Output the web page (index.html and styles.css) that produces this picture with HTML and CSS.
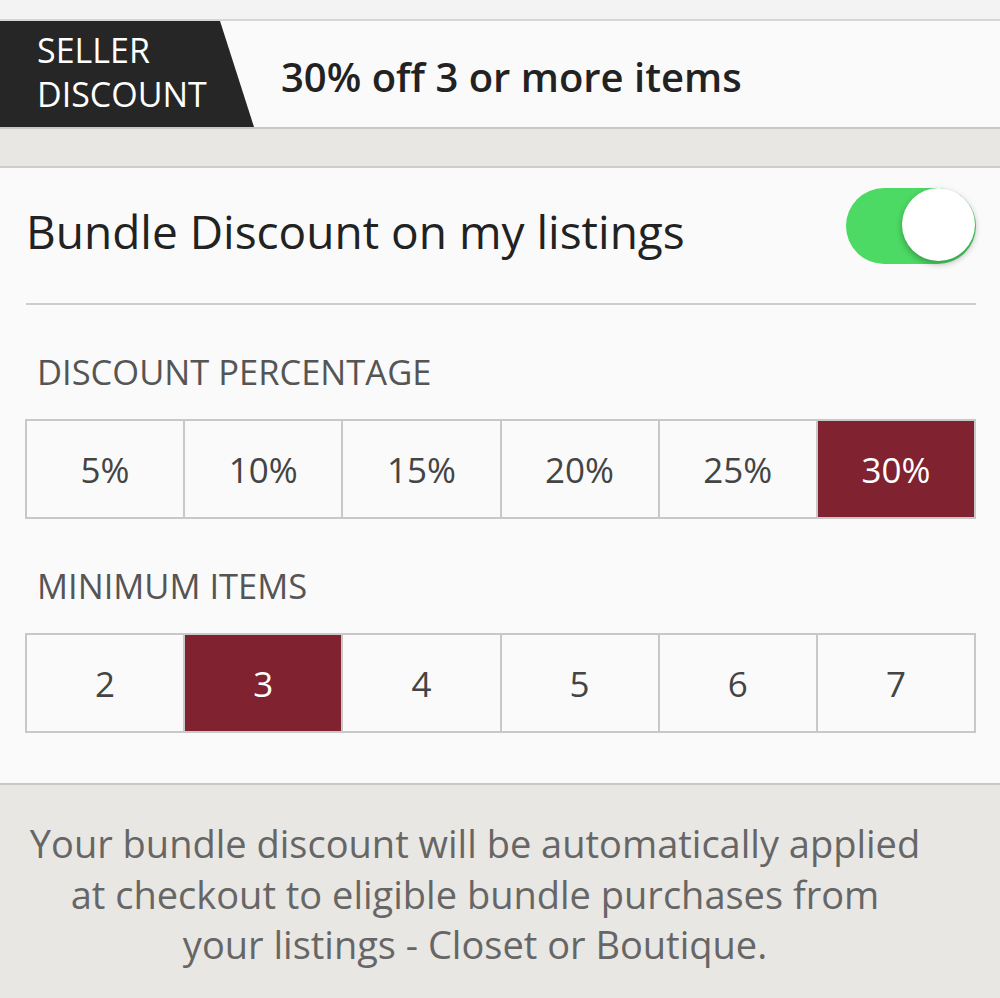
FILE: index.html
```html
<!DOCTYPE html>
<html lang="en">
<head>
    <meta charset="UTF-8">
    <meta name="viewport" content="width=device-width, initial-scale=1.0">
    <title>Bundle Discount</title>
    <link rel="stylesheet" href="styles.css">
</head>
<body>
    <div class="top-strip"></div>
    <div class="offer-bar">
        <div class="tag">SELLER<br>DISCOUNT</div>
        <div class="offer-text">30% off 3 or more items</div>
    </div>
    <div class="band"></div>
    <div class="panel">
        <div class="toggle-row">
            <span class="toggle-label">Bundle Discount on my listings</span>
            <div class="switch on"><div class="knob"></div></div>
        </div>
        <div class="divider"></div>

        <div class="section-title">DISCOUNT PERCENTAGE</div>
        <div class="options">
            <div class="option">5%</div>
            <div class="option">10%</div>
            <div class="option">15%</div>
            <div class="option">20%</div>
            <div class="option">25%</div>
            <div class="option selected">30%</div>
        </div>

        <div class="section-title">MINIMUM ITEMS</div>
        <div class="options">
            <div class="option">2</div>
            <div class="option selected">3</div>
            <div class="option">4</div>
            <div class="option">5</div>
            <div class="option">6</div>
            <div class="option">7</div>
        </div>
    </div>
    <div class="note">
        Your bundle discount will be automatically applied<br>
        at checkout to eligible bundle purchases from<br>
        your listings - Closet or Boutique.
    </div>
</body>
</html>
```

FILE: styles.css
```css
body {
    font-family: "Open Sans", Lato, sans-serif;
    background-color: #e9e7e3;
    margin: 0;
    padding: 0;
    width: 1000px;
    height: 998px;
    overflow: hidden;
}

.top-strip {
    height: 19px;
    background-color: #f4f3f3;
    border-bottom: 2px solid #d6d6d6;
}

.offer-bar {
    display: flex;
    align-items: center;
    height: 106px;
    background-color: #fafafa;
    border-bottom: 2px solid #c9c8c6;
}

.tag {
    width: 254px;
    height: 106px;
    flex-shrink: 0;
    box-sizing: border-box;
    padding: 7px 0 0 37px;
    background-color: #262626;
    clip-path: polygon(0 0, 220px 0, 254px 100%, 0 100%);
    color: #fff;
    font-size: 34px;
    line-height: 44px;
}

.offer-text {
    margin-left: 27px;
    margin-top: 6px;
    font-size: 40px;
    line-height: 40px;
    font-weight: 600;
    color: #222;
}

.band {
    height: 37px;
    border-bottom: 2px solid #cfcdca;
}

.panel {
    background-color: #fafafa;
    padding: 0 24px 50px 25px;
    border-bottom: 2px solid #c9c8c6;
}

.toggle-row {
    display: flex;
    justify-content: space-between;
    align-items: flex-start;
    height: 135px;
    padding-left: 1px;
}

.toggle-label {
    margin-top: 32px;
    font-size: 46px;
    line-height: 62px;
    color: #222;
}

.switch {
    margin-top: 20px;
    width: 130px;
    height: 76px;
    border-radius: 38px;
    background-color: #4cd964;
    box-sizing: border-box;
    display: flex;
    justify-content: flex-end;
    align-items: flex-start;
    padding: 0 1px;
}

.knob {
    width: 73px;
    height: 73px;
    border-radius: 50%;
    background-color: #fff;
    box-shadow: 0 3px 6px rgba(0, 0, 0, 0.3);
}

.divider {
    height: 2px;
    background-color: #cfcdcb;
    margin-left: 1px;
}

.section-title {
    padding: 44px 0 0 12px;
    height: 70px;
    font-size: 34.5px;
    line-height: 46px;
    color: #555;
}

.options {
    display: grid;
    grid-template-columns: repeat(6, 1fr);
    border: 2px solid #c8c8c8;
    border-right: none;
    height: 96px;
}

.option {
    display: flex;
    justify-content: center;
    align-items: center;
    border-right: 2px solid #c8c8c8;
    font-size: 35px;
    color: #444;
}

.option.selected {
    background-color: #80222f;
    color: #fff;
}

.note {
    padding: 33px 50px 0 0;
    text-align: center;
    font-size: 38px;
    line-height: 50.5px;
    color: #666;
}
```
